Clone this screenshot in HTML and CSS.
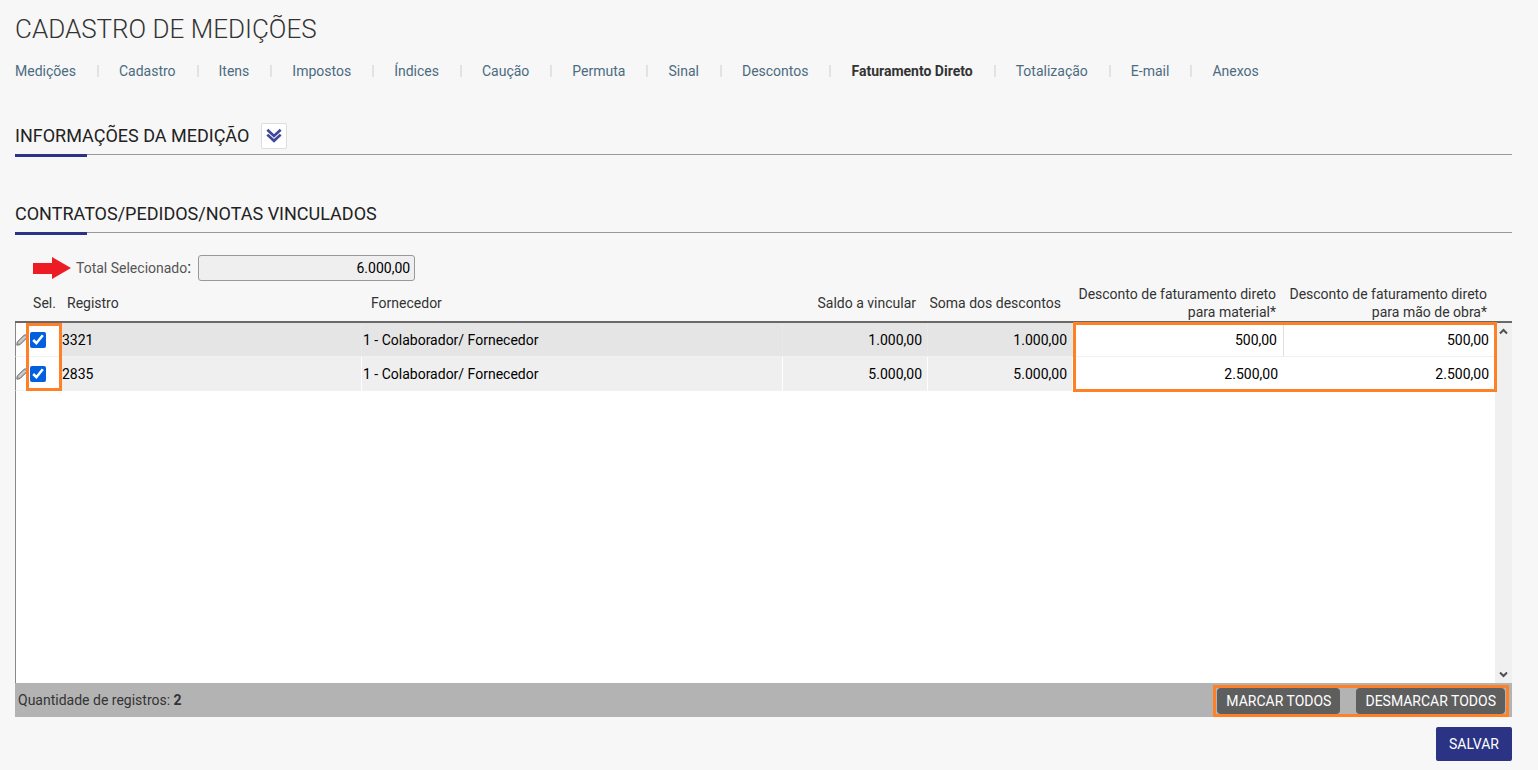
FILE: index.html
```html
<!DOCTYPE html>
<html lang="pt-BR">
<head>
    <meta charset="UTF-8">
    <meta name="viewport" content="width=device-width, initial-scale=1">
    <title>Cadastro de Medições</title>
    <link rel="stylesheet" href="styles.css">
</head>
<body>
    <h1 class="page-title">CADASTRO DE MEDIÇÕES</h1>

    <nav class="tabs">
        <a class="tab" href="#">Medições</a>
        <a class="tab" href="#">Cadastro</a>
        <a class="tab" href="#">Itens</a>
        <a class="tab" href="#">Impostos</a>
        <a class="tab" href="#">Índices</a>
        <a class="tab" href="#">Caução</a>
        <a class="tab" href="#">Permuta</a>
        <a class="tab" href="#">Sinal</a>
        <a class="tab" href="#">Descontos</a>
        <a class="tab active" href="#">Faturamento Direto</a>
        <a class="tab" href="#">Totalização</a>
        <a class="tab" href="#">E-mail</a>
        <a class="tab" href="#">Anexos</a>
    </nav>

    <div class="section-header">
        <h2>INFORMAÇÕES DA MEDIÇÃO</h2>
        <button class="expand" type="button" aria-label="Expandir">
            <svg viewBox="0 0 18 16">
                <path d="M1.5 1.5 L9 8.5 L16.5 1.5" />
                <path d="M1.5 7 L9 14 L16.5 7" />
            </svg>
        </button>
    </div>

    <div class="section-header">
        <h2>CONTRATOS/PEDIDOS/NOTAS VINCULADOS</h2>
    </div>

    <div class="total">
        <svg class="arrow" viewBox="0 0 38 22">
            <path d="M0 6 H19 V0 L38 11 L19 22 V17 H0 Z" />
        </svg>
        <label for="total">Total Selecionado<span class="colon">:</span></label>
        <input id="total" type="text" value="6.000,00" readonly>
    </div>

    <table class="grid">
        <colgroup>
            <col class="col-edit">
            <col class="col-sel">
            <col class="col-registro">
            <col>
            <col class="col-valor">
            <col class="col-valor">
            <col class="col-desconto">
            <col class="col-desconto">
            <col class="col-scroll">
        </colgroup>
        <thead>
            <tr>
                <th></th>
                <th class="sel-head">Sel.</th>
                <th>Registro</th>
                <th class="fornecedor">Fornecedor</th>
                <th class="num">Saldo a vincular</th>
                <th class="num">Soma dos descontos</th>
                <th class="num desconto-head" id="material">Desconto de faturamento direto<br>para material*</th>
                <th class="num desconto-head" id="mao-obra">Desconto de faturamento direto<br>para mão de obra*</th>
                <th></th>
            </tr>
        </thead>
        <tbody>
            <tr class="row current">
                <td class="edit">
                    <svg class="pencil" viewBox="0 0 12 12">
                        <path class="pencil-body" d="M0.8 11.2 L1.2 8 L8 1.3 Q9.3 0.3 10.7 1.4 Q11.7 2.7 10.7 4 L4 10.7 Z" />
                        <path class="pencil-light" d="M2.8 9 L9.4 2.6" />
                    </svg>
                </td>
                <td class="sel">
                    <input type="checkbox" aria-label="Selecionar 3321" checked>
                    <span class="mark mark-sel"></span>
                </td>
                <td class="locked">3321</td>
                <td class="locked">1 - Colaborador/ Fornecedor</td>
                <td class="locked num">1.000,00</td>
                <td class="locked num">1.000,00</td>
                <td class="desconto divided">
                    <input type="text" aria-labelledby="material" value="500,00">
                    <span class="mark mark-desconto"></span>
                </td>
                <td class="desconto"><input type="text" aria-labelledby="mao-obra" value="500,00"></td>
                <td class="scroll" rowspan="3">
                    <div class="scrollbar">
                        <svg viewBox="0 0 9 7"><path d="M1 5.5 L4.5 2 L8 5.5" /></svg>
                        <svg viewBox="0 0 9 7"><path d="M1 1.5 L4.5 5 L8 1.5" /></svg>
                    </div>
                </td>
            </tr>
            <tr class="row">
                <td class="edit">
                    <svg class="pencil" viewBox="0 0 12 12">
                        <path class="pencil-body" d="M0.8 11.2 L1.2 8 L8 1.3 Q9.3 0.3 10.7 1.4 Q11.7 2.7 10.7 4 L4 10.7 Z" />
                        <path class="pencil-light" d="M2.8 9 L9.4 2.6" />
                    </svg>
                </td>
                <td class="sel"><input type="checkbox" aria-label="Selecionar 2835" checked></td>
                <td class="locked">2835</td>
                <td class="locked">1 - Colaborador/ Fornecedor</td>
                <td class="locked num">5.000,00</td>
                <td class="locked num">5.000,00</td>
                <td class="desconto"><input type="text" aria-labelledby="material" value="2.500,00"></td>
                <td class="desconto"><input type="text" aria-labelledby="mao-obra" value="2.500,00"></td>
            </tr>
            <tr class="empty">
                <td class="edit" colspan="8"></td>
            </tr>
        </tbody>
    </table>

    <div class="grid-footer">
        <span>Quantidade de registros: <b>2</b></span>
        <div class="grid-actions">
            <button type="button">MARCAR TODOS</button>
            <button type="button">DESMARCAR TODOS</button>
        </div>
    </div>

    <div class="actions">
        <button class="save" type="button">SALVAR</button>
    </div>
</body>
</html>
```

FILE: styles.css
```css
* {
    box-sizing: border-box;
}

body {
    margin: 0;
    padding: 12px 26px 9px 15px;
    background: #f7f7f7;
    color: #333;
    font-family: Roboto, sans-serif;
    font-size: 14px;
    line-height: 18px;
}

button,
input {
    font-family: inherit;
    font-size: 14px;
}

.page-title {
    margin: 0;
    font-size: 26px;
    font-weight: 300;
    line-height: 34px;
}

/* Tabs */
.tabs {
    display: flex;
    flex-wrap: wrap;
    margin: 16px 0 37px;
}

.tab {
    display: flex;
    align-items: center;
    color: #4b6b80;
    text-decoration: none;
}

.tab:not(:last-child)::after {
    content: "";
    width: 2px;
    height: 12px;
    margin: 0 20px 0 21px;
    background: #e2e2e2;
}

.tab.active {
    color: #333;
    font-weight: bold;
}

/* Section titles */
.section-header {
    position: relative;
    display: flex;
    align-items: center;
    gap: 12px;
    height: 38px;
    margin-bottom: 40px;
    border-bottom: 1px solid #999;
}

.section-header::after {
    content: "";
    position: absolute;
    left: 0;
    bottom: -3px;
    width: 72px;
    height: 3px;
    background: #2b3384;
}

.section-header h2 {
    margin: 0;
    color: #222;
    font-size: 18px;
    font-weight: normal;
}

.expand {
    display: flex;
    align-items: center;
    justify-content: center;
    width: 26px;
    height: 26px;
    padding: 0;
    border: 1px solid #ddd;
    border-radius: 2px;
    background: #fff;
}

.expand svg {
    width: 16px;
    height: 15px;
    fill: none;
    stroke: #3f479b;
    stroke-width: 3;
}

/* Total */
.total {
    display: flex;
    align-items: center;
    margin-top: -18px;
    padding-left: 18px;
}

.arrow {
    width: 38px;
    height: 22px;
    margin-right: 5px;
    fill: #ed1c24;
}

.total label {
    color: #555;
}

.colon {
    color: #222;
    font-size: 16px;
}

.total input {
    width: 217px;
    height: 26px;
    margin-left: 7px;
    padding: 0 4px;
    border: 1px solid #999;
    border-radius: 3px;
    background: #efefef;
    color: #000;
    text-align: right;
}

/* Grid */
.grid {
    width: 100%;
    margin-top: 4px;
    border-collapse: separate;
    border-spacing: 0;
    table-layout: fixed;
}

.col-edit {
    width: 13px;
}

.col-sel {
    width: 33px;
}

.col-registro {
    width: 301px;
}

.col-valor {
    width: 145px;
}

.col-desconto {
    width: 211px;
}

.col-scroll {
    width: 17px;
}

.grid th {
    height: 38px;
    padding: 0 6px;
    border-bottom: 2px solid #6b6869;
    font-weight: normal;
    text-align: left;
    white-space: nowrap;
}

.grid th.sel-head {
    padding: 0;
    text-align: center;
}

.grid th.fornecedor {
    padding-left: 9px;
}

.grid .num {
    text-align: right;
}

.grid th.num {
    padding: 0 12px 0 0;
}

.grid th.desconto-head {
    padding-right: 8px;
}

.grid td {
    padding: 0;
    background: #fff;
    color: #000;
}

.grid .row td {
    height: 34px;
    border-bottom: 1px solid #f1f1f1;
}

.grid td.edit {
    border-left: 1px solid #888;
}

.grid .row .locked {
    padding: 0 5px 0 1px;
    border-right: 1px solid #fff;
    background: #efefef;
}

.grid .current .locked {
    border-right-color: #e9e9e9;
    background: #e5e5e5;
}

.grid .divided {
    border-right: 1px solid #e0e0e0;
}

.pencil {
    display: block;
    width: 12px;
    height: 12px;
}

.pencil-body {
    fill: #aaa;
    stroke: #777;
}

.pencil-light {
    stroke: #ccc;
    stroke-width: 2;
}

.sel,
.desconto {
    position: relative;
}

.sel input {
    display: block;
    width: 16px;
    height: 16px;
    margin: 0 0 0 2px;
    accent-color: #0060df;
}

.desconto input {
    display: block;
    width: 100%;
    height: 32px;
    padding: 0 6px;
    border: 0;
    background: none;
    color: #000;
    text-align: right;
}

/* Orange frames around the fields being explained */
.mark {
    position: absolute;
    z-index: 1;
    border: 3px solid #ff8127;
    pointer-events: none;
}

.mark-sel {
    top: 0;
    left: -2px;
    width: 36px;
    height: 68px;
}

.mark-desconto {
    top: -1px;
    left: 0;
    width: 424px;
    height: 70px;
}

.empty td {
    height: 292px;
}

.grid td.scroll {
    height: 1px;
    border: 0;
    background: #f0f0f0;
}

.scrollbar {
    display: flex;
    flex-direction: column;
    align-items: center;
    justify-content: space-between;
    height: 360px;
    padding: 5px 0;
}

.scrollbar svg {
    width: 9px;
    height: 7px;
    fill: none;
    stroke: #505050;
    stroke-width: 2;
}

.grid-footer {
    display: flex;
    align-items: center;
    justify-content: space-between;
    height: 34px;
    padding: 0 3px;
    background: #b3b3b3;
}

.grid-actions {
    display: flex;
    align-self: flex-end;
    gap: 16px;
    padding: 0 1px;
    border: 3px solid #ff8127;
}

.grid-actions button {
    height: 26px;
    padding: 0 9px;
    border: 0;
    border-radius: 4px;
    background: #5e5e5e;
    color: #fff;
}

.actions {
    display: flex;
    justify-content: flex-end;
    margin-top: 10px;
}

.save {
    height: 34px;
    padding: 0 13px;
    border: 0;
    border-radius: 2px;
    background: #2b3384;
    color: #fff;
}
```
